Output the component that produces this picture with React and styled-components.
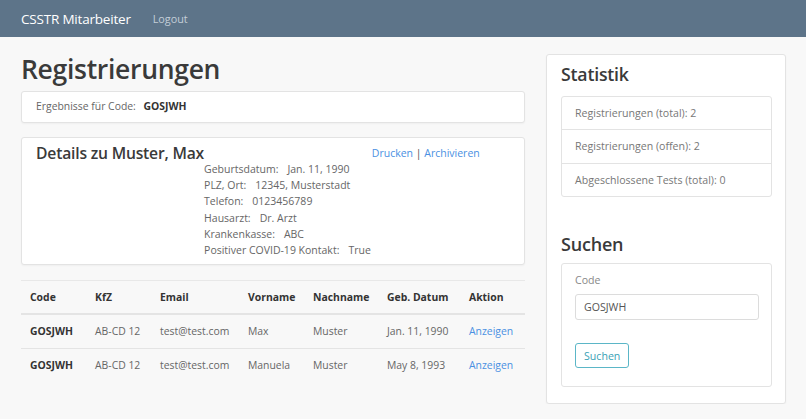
import React from "react";
import styled, { createGlobalStyle } from "styled-components";

const GlobalStyle = createGlobalStyle`
  body {
    margin: 0;
    background: #f8f8f8;
    font-family: "Open Sans", "Noto Sans", sans-serif;
    color: #555;
  }
`;

const Navbar = styled.nav`
  height: 37px;
  background: #5d7489;
  display: flex;
  align-items: center;
  padding: 0 21px;
  gap: 22px;
`;

const Brand = styled.span`
  color: #fff;
  font-size: 13.5px;
  letter-spacing: -0.2px;
`;

const NavLink = styled.a`
  color: #c3ced8;
  font-size: 10.8px;
  text-decoration: none;
`;

const Main = styled.div`
  display: flex;
  align-items: flex-start;
  padding: 0 20px 0 21px;
  gap: 21px;
`;

const LeftCol = styled.div`
  width: 504px;
  flex-shrink: 0;
`;

const RightCol = styled.div`
  width: 240px;
  flex-shrink: 0;
  margin-top: 17px;
`;

const Title = styled.h1`
  margin: 16px 0 5px;
  font-size: 26.5px;
  font-weight: 600;
  color: #3a3a3a;
  letter-spacing: -0.3px;
  line-height: 33px;
`;

const Card = styled.div`
  background: #fff;
  border: 1px solid #e3e3e3;
  border-radius: 3px;
  box-shadow: 0 1px 2px rgba(0, 0, 0, 0.04);
  padding: ${(p) => p.$pad || "0"};
  margin-bottom: ${(p) => p.$mb || "0"};
`;

const SmallText = styled.div`
  font-size: 10.4px;
  line-height: 15px;
  color: #666;
`;

const Strong = styled.b`
  color: #333;
  margin-left: 5px;
`;

const DetailsRow = styled.div`
  display: flex;
  align-items: flex-start;
  white-space: nowrap;
`;

const DetailsTitle = styled.h4`
  margin: 0;
  flex-shrink: 0;
  font-size: 15.7px;
  font-weight: 600;
  color: #3a3a3a;
  line-height: 22px;
  letter-spacing: -0.2px;
`;

const DetailList = styled.div`
  flex-shrink: 0;
  padding-top: 19px;
  font-size: 10.5px;
  color: #666;
  line-height: 16.2px;
`;

const Label = styled.span`
  margin-right: 9px;
`;

const Links = styled.div`
  flex-shrink: 0;
  margin-left: 1px;
  padding-top: 3px;
  font-size: 10.5px;
  line-height: 16px;
  color: #555;
`;

const Link = styled.a`
  color: #4a90e2;
  text-decoration: none;
`;

const Table = styled.table`
  width: 100%;
  table-layout: fixed;
  border-collapse: collapse;
  margin-top: 15px;
  font-size: 10.4px;
  border-top: 1px solid #e8e8e8;
`;

const Th = styled.th`
  box-sizing: border-box;
  text-align: left;
  font-weight: 700;
  color: #333;
  padding: 9px 9px;
  height: 33px;
  border-bottom: 2px solid #e4e4e4;
  width: ${(p) => p.$w}px;
  white-space: nowrap;
`;

const Td = styled.td`
  box-sizing: border-box;
  padding: 0 9px;
  height: 34px;
  color: ${(p) => (p.$bold ? "#333" : "#666")};
  font-weight: ${(p) => (p.$bold ? 700 : 400)};
  border-bottom: ${(p) => (p.$last ? "none" : "1px solid #e4e4e4")};
  white-space: nowrap;
`;

const SideHeading = styled.h3`
  margin: 0 0 ${(p) => p.$gap || 9}px;
  font-size: ${(p) => p.$size || 18}px;
  font-weight: 600;
  color: #3a3a3a;
  line-height: 26px;
  letter-spacing: -0.2px;
`;

const ListGroup = styled.ul`
  list-style: none;
  margin: 0 0 34px;
  padding: 0;
  border: 1px solid #e3e3e3;
  border-radius: 3px;
`;

const ListItem = styled.li`
  height: 32.3px;
  display: flex;
  align-items: center;
  padding: 0 13px;
  font-size: 10.6px;
  color: #777;
  border-top: ${(p) => (p.$first ? "none" : "1px solid #e3e3e3")};
`;

const FormBox = styled.div`
  border: 1px solid #e3e3e3;
  border-radius: 3px;
  padding: 8px 13px 18px;
`;

const FieldLabel = styled.label`
  display: block;
  font-size: 10.6px;
  line-height: 17px;
  color: #888;
  margin-bottom: 5px;
`;

const Input = styled.input`
  box-sizing: border-box;
  width: 184px;
  height: 26px;
  border: 1px solid #dcdcdc;
  border-radius: 3px;
  padding: 0 8px;
  font-family: inherit;
  font-size: 10.6px;
  color: #555;
  margin-bottom: 23px;
  display: block;
`;

const OutlineButton = styled.button`
  height: 25px;
  padding: 0 8px;
  border: 1px solid #5bb6c7;
  border-radius: 3px;
  background: #fff;
  color: #3aa2b6;
  font-family: inherit;
  font-size: 10.6px;
`;

const details = [
  ["Geburtsdatum:", "Jan. 11, 1990"],
  ["PLZ, Ort:", "12345, Musterstadt"],
  ["Telefon:", "0123456789"],
  ["Hausarzt:", "Dr. Arzt"],
  ["Krankenkasse:", "ABC"],
  ["Positiver COVID-19 Kontakt:", "True"],
];

const columns = [
  ["Code", 65],
  ["KfZ", 65],
  ["Email", 88],
  ["Vorname", 65],
  ["Nachname", 74],
  ["Geb. Datum", 82],
  ["Aktion", 65],
];

const rows = [
  ["GOSJWH", "AB-CD 12", "test@test.com", "Max", "Muster", "Jan. 11, 1990"],
  ["GOSJWH", "AB-CD 12", "test@test.com", "Manuela", "Muster", "May 8, 1993"],
];

const stats = [
  "Registrierungen (total): 2",
  "Registrierungen (offen): 2",
  "Abgeschlossene Tests (total): 0",
];

export default function App() {
  return (
    <>
      <GlobalStyle />
      <Navbar>
        <Brand>CSSTR Mitarbeiter</Brand>
        <NavLink href="#">Logout</NavLink>
      </Navbar>
      <Main>
        <LeftCol>
          <Title>Registrierungen</Title>
          <Card $pad="7px 14px 8px" $mb="14px">
            <SmallText>
              Ergebnisse für Code: <Strong>GOSJWH</Strong>
            </SmallText>
          </Card>
          <Card $pad="4px 14px 6px">
            <DetailsRow>
              <DetailsTitle>Details zu Muster, Max</DetailsTitle>
              <DetailList>
                {details.map(([k, v]) => (
                  <div key={k}>
                    <Label>{k}</Label>
                    {v}
                  </div>
                ))}
              </DetailList>
              <Links>
                <Link href="#">Drucken</Link> | <Link href="#">Archivieren</Link>
              </Links>
            </DetailsRow>
          </Card>
          <Table>
            <thead>
              <tr>
                {columns.map(([c, w]) => (
                  <Th key={c} $w={w}>
                    {c}
                  </Th>
                ))}
              </tr>
            </thead>
            <tbody>
              {rows.map((r, i) => (
                <tr key={i}>
                  {r.map((cell, j) => (
                    <Td key={j} $bold={j === 0} $last={i === rows.length - 1}>
                      {cell}
                    </Td>
                  ))}
                  <Td $last={i === rows.length - 1}>
                    <Link href="#">Anzeigen</Link>
                  </Td>
                </tr>
              ))}
            </tbody>
          </Table>
        </LeftCol>
        <RightCol>
          <Card $pad="6px 13px 16px 14px">
            <SideHeading $size={17.7}>Statistik</SideHeading>
            <ListGroup>
              {stats.map((s, i) => (
                <ListItem key={s} $first={i === 0}>
                  {s}
                </ListItem>
              ))}
            </ListGroup>
            <SideHeading $gap={6}>Suchen</SideHeading>
            <FormBox>
              <FieldLabel>Code</FieldLabel>
              <Input defaultValue="GOSJWH" />
              <OutlineButton>Suchen</OutlineButton>
            </FormBox>
          </Card>
        </RightCol>
      </Main>
    </>
  );
}
